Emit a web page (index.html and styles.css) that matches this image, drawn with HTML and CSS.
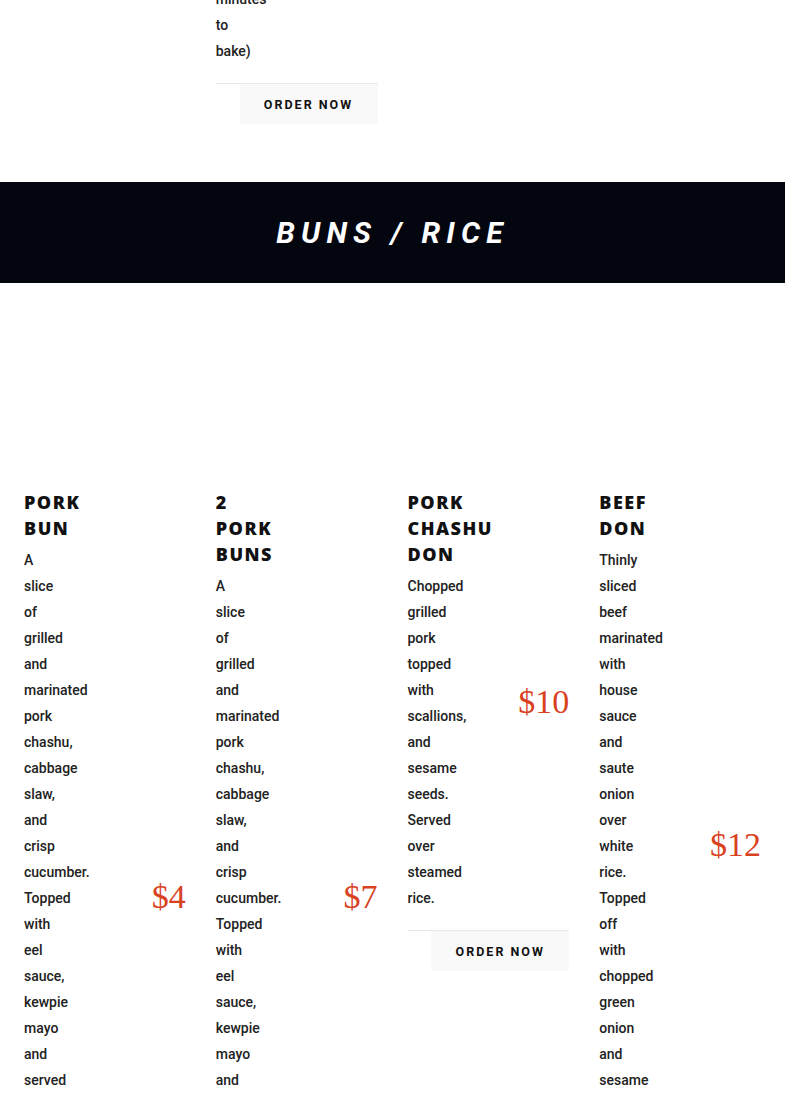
FILE: index.html
```html
<!DOCTYPE html>
<html lang="en">

<head>
  <title>Menu - Buns / Rice</title>
  <link rel="stylesheet" href="styles.css">
</head>

<body>
  <section class="menu-section menu-section--prev">
    <div class="menu-grid">
      <div class="menu-item"></div>
      <div class="menu-item">
        <div class="item-main">
          <div class="item-text">
            <p class="item-desc">minutes to bake)</p>
          </div>
        </div>
        <div class="item-order">
          <button class="order-btn">Order Now</button>
        </div>
      </div>
      <div class="menu-item"></div>
      <div class="menu-item"></div>
    </div>
  </section>

  <div class="section-band">
    <h2 class="section-title">Buns / Rice</h2>
  </div>

  <section class="menu-section">
    <div class="menu-grid">
      <div class="menu-item">
        <div class="item-main">
          <div class="item-text">
            <h3 class="item-name">Pork Bun</h3>
            <p class="item-desc">A slice of grilled and marinated pork chashu, cabbage slaw, and crisp cucumber. Topped with eel sauce, kewpie mayo and served in a soft steamed bao bun. (1 piece)</p>
          </div>
          <div class="item-price">$4</div>
        </div>
      </div>

      <div class="menu-item">
        <div class="item-main">
          <div class="item-text">
            <h3 class="item-name">2 Pork Buns</h3>
            <p class="item-desc">A slice of grilled and marinated pork chashu, cabbage slaw, and crisp cucumber. Topped with eel sauce, kewpie mayo and served in a steamed bao bun. (2 pieces)</p>
          </div>
          <div class="item-price">$7</div>
        </div>
      </div>

      <div class="menu-item">
        <div class="item-main">
          <div class="item-text">
            <h3 class="item-name">Pork Chashu Don</h3>
            <p class="item-desc">Chopped grilled pork topped with scallions, and sesame seeds. Served over steamed rice.</p>
          </div>
          <div class="item-price">$10</div>
        </div>
        <div class="item-order">
          <button class="order-btn">Order Now</button>
        </div>
      </div>

      <div class="menu-item">
        <div class="item-main">
          <div class="item-text">
            <h3 class="item-name">Beef Don</h3>
            <p class="item-desc">Thinly sliced beef marinated with house sauce and saute onion over white rice. Topped off with chopped green onion and sesame seeds. (Add egg +$1)</p>
          </div>
          <div class="item-price">$12</div>
        </div>
      </div>
    </div>
  </section>
</body>

</html>
```

FILE: styles.css
```css
body {
  margin: 0;
  background-color: #fff;
  color: #1a1a1a;
  font-family: Roboto, "Liberation Sans", sans-serif;
}

.menu-section {
  padding-top: 206px;
}

/* the previous section is scrolled off the top of the window */
.menu-section--prev {
  padding-top: 0;
  margin-top: -14px;
  padding-bottom: 58px;
}

.menu-grid {
  display: grid;
  grid-template-columns: repeat(4, 1fr);
  column-gap: 30px;
  padding: 0 24px;
  align-items: start;
}

.menu-item {
  display: flex;
  flex-direction: column;
}

.item-main {
  display: flex;
  align-items: center;
}

/* collapsed text column: every word sits on its own line */
.item-text {
  display: flex;
  flex-direction: column;
  width: 1px;
  min-width: 0;
}

.item-name {
  margin: 0 0 6px;
  font-family: "Open Sans", "DejaVu Sans", sans-serif;
  font-size: 18px;
  font-weight: 800;
  line-height: 26px;
  letter-spacing: 1.5px;
  text-transform: uppercase;
  color: #111;
}

.item-desc {
  margin: 0;
  font-size: 14px;
  font-weight: 500;
  line-height: 26px;
  color: #222;
}

.item-price {
  margin-left: auto;
  padding-top: 4px;
  font-family: "Liberation Serif", "DejaVu Serif", serif;
  font-size: 34px;
  line-height: 1;
  color: #d9421f;
}

.item-order {
  display: flex;
  justify-content: flex-end;
  margin-top: 19px;
  border-top: 1px solid #e8e8e8;
}

.order-btn {
  width: 138px;
  height: 40px;
  border: 0;
  background-color: #f9f9f9;
  font-family: Roboto, "Liberation Sans", sans-serif;
  font-size: 12.5px;
  font-weight: 700;
  letter-spacing: 2px;
  text-transform: uppercase;
  color: #111;
  cursor: pointer;
}

.section-band {
  display: flex;
  justify-content: center;
  align-items: center;
  height: 101px;
  background-color: #03050f;
}

.section-title {
  margin: 0;
  font-size: 30px;
  font-weight: 700;
  font-style: italic;
  letter-spacing: 6.2px;
  text-transform: uppercase;
  color: #fff;
}
```
